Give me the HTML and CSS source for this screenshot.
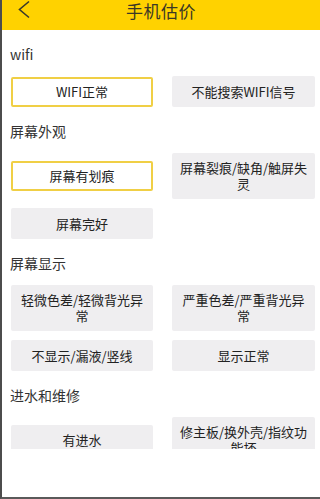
FILE: index.html
```html
<!DOCTYPE html>
<html lang="zh-CN">
<head>
<meta charset="utf-8">
<title>手机估价</title>
<link rel="stylesheet" href="styles.css">
</head>
<body>
<div class="frame">
  <header class="topbar">
    <svg class="back" width="14" height="20" viewBox="0 0 14 20" aria-hidden="true">
      <polyline points="11,1.5 1.5,9.5 11,17.5" fill="none" stroke="#3a3a2a" stroke-width="1.6" stroke-linejoin="miter"/>
    </svg>
    <h1 class="title">手机估价</h1>
  </header>
  <main class="scroll">
    <section class="group">
      <div class="label">wifi</div>
      <div class="options">
        <div class="opt selected">WIFI正常</div>
        <div class="opt">不能搜索WIFI信号</div>
      </div>
    </section>
    <section class="group">
      <div class="label">屏幕外观</div>
      <div class="options">
        <div class="opt selected">屏幕有划痕</div>
        <div class="opt">屏幕裂痕/缺角/触屏失灵</div>
        <div class="opt">屏幕完好</div>
      </div>
    </section>
    <section class="group">
      <div class="label">屏幕显示</div>
      <div class="options">
        <div class="opt">轻微色差/轻微背光异常</div>
        <div class="opt">严重色差/严重背光异常</div>
        <div class="opt">不显示/漏液/竖线</div>
        <div class="opt">显示正常</div>
      </div>
    </section>
    <section class="group">
      <div class="label">进水和维修</div>
      <div class="options">
        <div class="opt">有进水</div>
        <div class="opt">修主板/换外壳/指纹功能坏</div>
      </div>
    </section>
  </main>
  <footer class="bottom"></footer>
</div>
</body>
</html>
```
FILE: styles.css
```css
html, body {
  margin: 0;
  padding: 0;
  background: #ffffff;
}
body {
  font-family: "Noto Sans CJK SC", "Noto Sans", sans-serif;
  color: #333333;
}
.frame {
  width: 320px;
  height: 499px;
  box-sizing: border-box;
  border-left: 2px solid #4c4c4c;
  border-bottom: 2px solid #5a5a5a;
  display: flex;
  flex-direction: column;
  overflow: hidden;
}
.topbar {
  height: 30px;
  flex: none;
  background: #ffd200;
  position: relative;
  display: flex;
  justify-content: center;
  align-items: flex-start;
}
.back {
  position: absolute;
  left: 16px;
  top: 0;
}
.title {
  margin: 0;
  padding-top: 1px;
  font-size: 17px;
  font-weight: normal;
  line-height: 20px;
  color: #3a3826;
  letter-spacing: 0.5px;
}
.scroll {
  height: 419px;
  flex: none;
  overflow: hidden;
}
.bottom {
  flex: 1;
  background: #ffffff;
}
.group {
  display: flex;
  flex-direction: column;
}
.label {
  padding: 14px 0 12px 8px;
  font-size: 14px;
  line-height: 20px;
  color: #333333;
}
.options {
  display: grid;
  grid-template-columns: 142px 143px;
  column-gap: 19px;
  row-gap: 9px;
  padding-left: 9px;
  align-items: center;
}
.opt {
  box-sizing: border-box;
  min-height: 31px;
  padding: 7px 5px;
  background: #efeef0;
  border-radius: 2px;
  font-size: 13px;
  line-height: 16px;
  text-align: center;
  color: #222222;
  display: flex;
  align-items: center;
  justify-content: center;
}
.opt.selected {
  background: #ffffff;
  border: 2px solid #f0cf45;
  min-height: 30px;
  padding: 5px 3px;
}
```
